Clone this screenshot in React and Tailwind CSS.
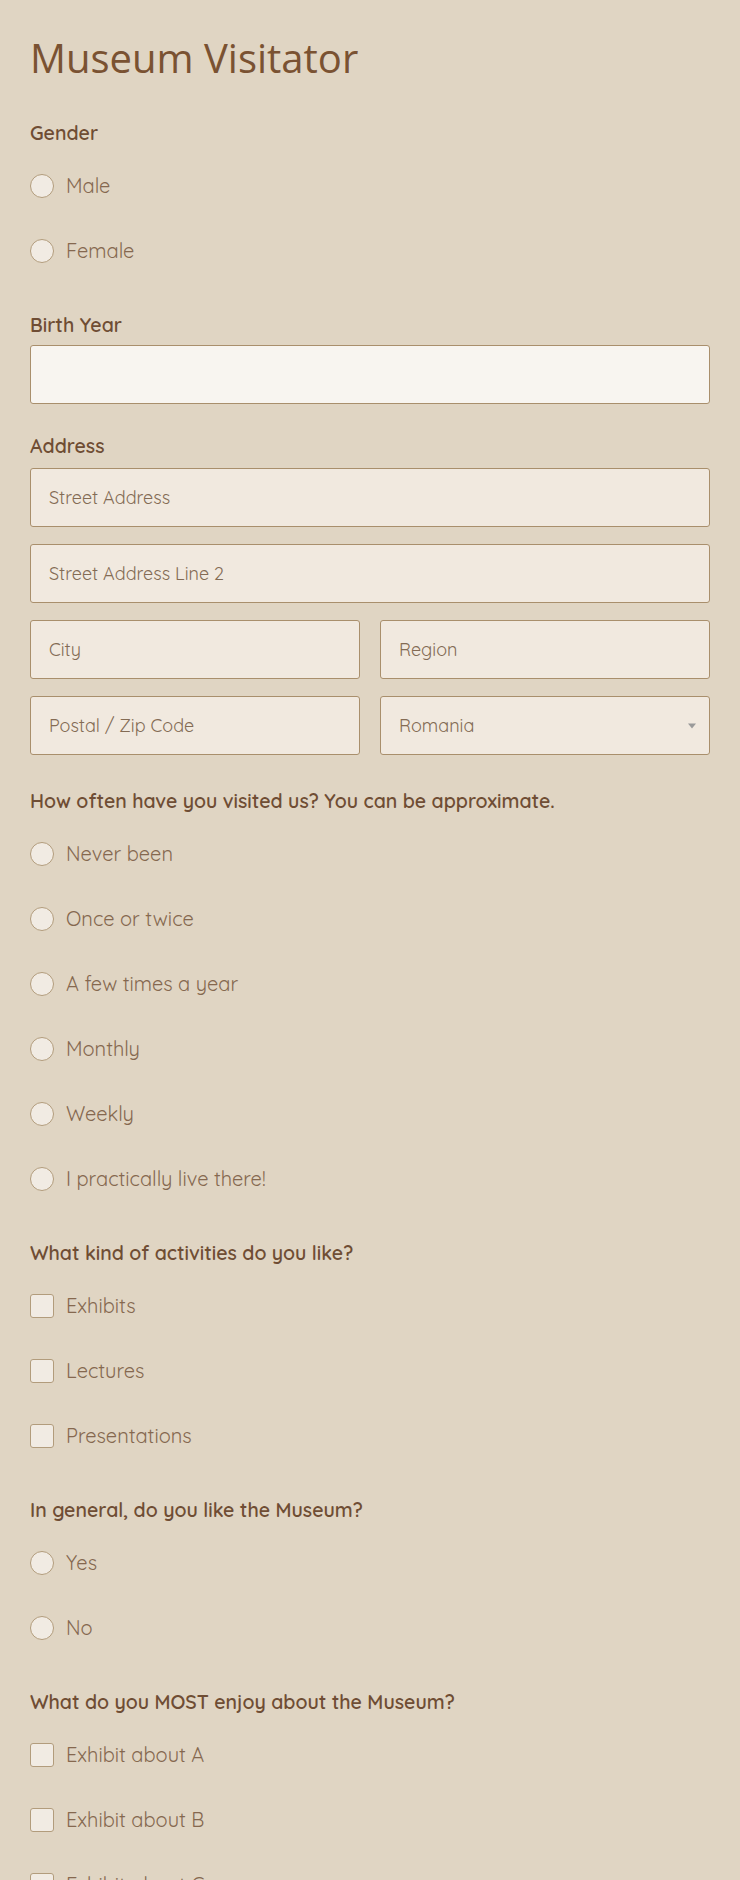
import React from "react";

const visitOptions = [
  "Never been",
  "Once or twice",
  "A few times a year",
  "Monthly",
  "Weekly",
  "I practically live there!",
];

function Label({ children, className = "" }) {
  return (
    <div
      className={`text-[19.5px] leading-6 font-semibold text-[#6f4d34] ${className}`}
    >
      {children}
    </div>
  );
}

function Choice({ type = "radio", label }) {
  return (
    <label className="flex items-center h-6 gap-3 cursor-pointer">
      <span
        className={`w-6 h-6 shrink-0 border border-[#b29c7c] bg-[#f1ebe3] ${
          type === "radio" ? "rounded-full" : "rounded-[3px]"
        }`}
      />
      <span className="text-[20px] leading-6 text-[#85684f]">{label}</span>
    </label>
  );
}

function ChoiceList({ type, items }) {
  return (
    <div className="mt-[29px] flex flex-col gap-[41px]">
      {items.map((item) => (
        <Choice key={item} type={type} label={item} />
      ))}
    </div>
  );
}

function TextBox({ placeholder, light = false }) {
  return (
    <input
      type="text"
      placeholder={placeholder}
      className={`w-full h-[59px] px-[18px] border border-[#a98f6c] rounded-[3px] text-[18px] text-[#6f4d34] placeholder:text-[#836b54] outline-none ${
        light ? "bg-[#f8f5f0]" : "bg-[#f1e9df]"
      }`}
    />
  );
}

export default function App() {
  return (
    <div
      className="min-h-screen bg-[#e0d5c3] px-[30px] pb-10"
      style={{ fontFamily: "Quicksand, Lato, 'Open Sans', sans-serif" }}
    >
      <h1
        className="pt-[38px] text-[40px] leading-none font-normal text-[#7a5232]"
        style={{ fontFamily: "'Open Sans', sans-serif" }}
      >
        Museum Visitator
      </h1>

      {/* Gender */}
      <Label className="mt-[43px]">Gender</Label>
      <ChoiceList type="radio" items={["Male", "Female"]} />

      {/* Birth year */}
      <Label className="mt-[50px]">Birth Year</Label>
      <div className="mt-[8px]">
        <TextBox light />
      </div>

      {/* Address */}
      <Label className="mt-[30px]">Address</Label>
      <div className="mt-[10px] flex flex-col gap-[17px]">
        <TextBox placeholder="Street Address" />
        <TextBox placeholder="Street Address Line 2" />
        <div className="grid grid-cols-2 gap-5">
          <TextBox placeholder="City" />
          <TextBox placeholder="Region" />
        </div>
        <div className="grid grid-cols-2 gap-5">
          <TextBox placeholder="Postal / Zip Code" />
          <div className="relative">
            <select className="w-full h-[59px] pl-[18px] pr-10 appearance-none border border-[#a98f6c] rounded-[3px] bg-[#f1e9df] text-[18px] text-[#836b54] outline-none">
              <option>Romania</option>
            </select>
            <span className="pointer-events-none absolute right-[14px] top-1/2 -translate-y-1/2 w-0 h-0 border-x-[4px] border-x-transparent border-t-[5px] border-t-[#9a9a9a]" />
          </div>
        </div>
      </div>

      {/* Visits */}
      <Label className="mt-[34px]">
        How often have you visited us? You can be approximate.
      </Label>
      <ChoiceList type="radio" items={visitOptions} />

      {/* Activities */}
      <Label className="mt-[50px]">What kind of activities do you like?</Label>
      <ChoiceList
        type="checkbox"
        items={["Exhibits", "Lectures", "Presentations"]}
      />

      {/* Like */}
      <Label className="mt-[50px]">In general, do you like the Museum?</Label>
      <ChoiceList type="radio" items={["Yes", "No"]} />

      {/* Most enjoy */}
      <Label className="mt-[50px]">
        What do you MOST enjoy about the Museum?
      </Label>
      <ChoiceList
        type="checkbox"
        items={["Exhibit about A", "Exhibit about B", "Exhibit about C"]}
      />
    </div>
  );
}
